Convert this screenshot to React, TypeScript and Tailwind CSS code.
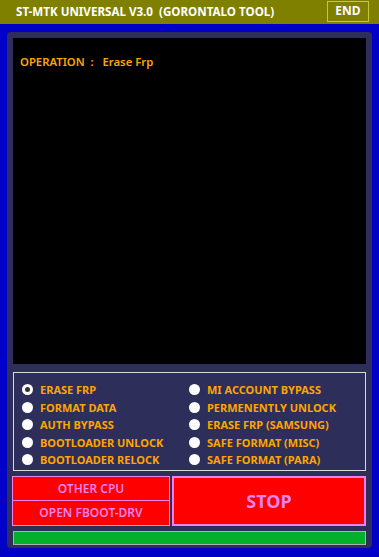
import React, { useState } from "react";

const leftOps = ["ERASE FRP", "FORMAT DATA", "AUTH BYPASS", "BOOTLOADER UNLOCK", "BOOTLOADER RELOCK"];
const rightOps = ["MI ACCOUNT BYPASS", "PERMENENTLY UNLOCK", "ERASE FRP (SAMSUNG)", "SAFE FORMAT (MISC)", "SAFE FORMAT (PARA)"];

function Radio({ label, checked, onClick }: { label: string; checked: boolean; onClick: () => void }) {
  return (
    <button onClick={onClick} className="flex h-[17.5px] items-center gap-[7px] text-left">
      {checked ? (
        <span className="flex h-[11px] w-[11px] items-center justify-center rounded-full bg-white">
          <span className="h-[5px] w-[5px] rounded-full bg-[#333]" />
        </span>
      ) : (
        <span className="h-[11px] w-[11px] rounded-full bg-white" />
      )}
      <span className="text-[11px] font-bold leading-none text-[#ffa500]">{label}</span>
    </button>
  );
}

export default function App() {
  const [selected, setSelected] = useState("ERASE FRP");

  return (
    <div className="h-[557px] w-[379px] overflow-hidden bg-[#0000c8] font-['Noto_Sans',sans-serif]">
      {/* title bar */}
      <div className="flex h-6 items-center justify-between bg-[#808000] pl-4 pr-[10px]">
        <span className="text-[11.6px] font-bold text-white whitespace-pre">ST-MTK UNIVERSAL V3.0  (GORONTALO TOOL)</span>
        <button className="mt-[-2px] h-[21px] w-[42px] border border-[#c8c830] text-[12px] font-bold text-white">END</button>
      </div>

      {/* main panel */}
      <div className="mx-[7px] mt-2 flex h-[516px] flex-col rounded-[4px] bg-[#2e2e5a] px-[6px] pt-[6px]">
        <div className="h-[326px] bg-black px-[7px] pt-[16px]">
          <p className="text-[11.3px] font-semibold text-[#ffa500] whitespace-pre">OPERATION  :   Erase Frp</p>
        </div>

        <div className="mt-2 grid h-[99px] grid-cols-[167px_1fr] border border-[#d8d8d8] pl-[8px] pt-[8px]">
          <div className="flex flex-col">
            {leftOps.map((o) => (
              <Radio key={o} label={o} checked={selected === o} onClick={() => setSelected(o)} />
            ))}
          </div>
          <div className="flex flex-col">
            {rightOps.map((o) => (
              <Radio key={o} label={o} checked={selected === o} onClick={() => setSelected(o)} />
            ))}
          </div>
        </div>

        <div className="mt-[5px] flex h-[50px] gap-[2px]">
          <div className="ml-[-1px] flex w-[158px] flex-col border border-[#ee82ee] bg-[#ff0000]">
            <button className="h-6 border-b border-[#ee82ee] text-[12px] font-semibold text-[#ee82ee]">OTHER CPU</button>
            <button className="flex-1 text-[12px] font-semibold text-[#ee82ee]">OPEN FBOOT-DRV</button>
          </div>
          <button className="flex-1 border-2 border-[#ee82ee] bg-[#ff0000] text-[18px] font-bold text-[#ee82ee]">STOP</button>
        </div>

        <div className="mt-[5px] h-[14px] border border-[#b0b0b0] bg-[#04b02a]" />
      </div>
    </div>
  );
}
